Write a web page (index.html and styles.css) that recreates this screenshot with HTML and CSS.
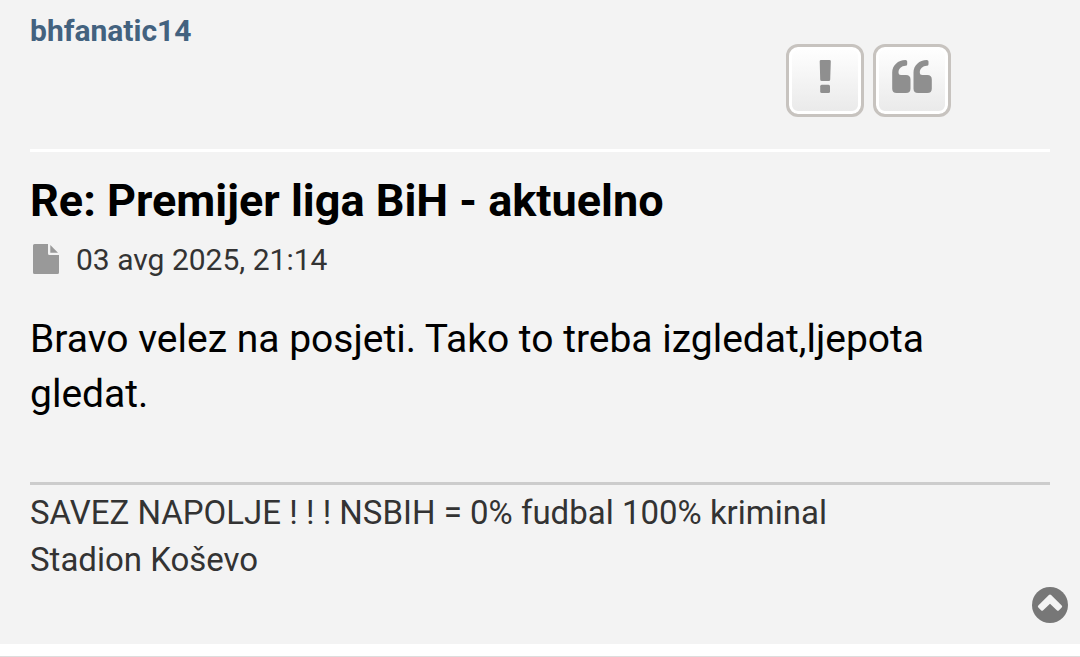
FILE: index.html
```
<!DOCTYPE html>
<html lang="bs">

<head>
    <meta charset="UTF-8">
    <meta name="viewport" content="width=device-width, initial-scale=1">
    <title>Premijer liga BiH - aktuelno</title>
    <link rel="stylesheet" href="styles.css">
</head>

<body>
    <div class="post">
        <div class="post-header">
            <a class="username" href="#">bhfanatic14</a>
            <div class="post-buttons">
                <a class="button" href="#" title="Prijavi">
                    <svg width="42" height="36" viewBox="0 0 42 36">
                        <path d="M17 1h8.500q1.300 0 1.300 1.300l-.6 18.200q0 1.500-1.500 1.500h-7q-1.500 0-1.500-1.500L15.700 2.300q0-1.300 1.300-1.300z" />
                        <rect x="16.200" y="25.700" width="9.800" height="8.300" rx="1.500" />
                    </svg>
                </a>
                <a class="button" href="#" title="Citiraj">
                    <svg width="42" height="36" viewBox="0 0 42 36">
                        <path id="quote" d="M1.200 13.500C1.200 6.500 7 1 14.500 1q1.700 0 1.700 1.500v2.800q0 1.500-1.700 1.500c-4 0-7 3-7 6.700q0 2.500 2.500 2.500h5q4.500 0 4.500 4.500v9q0 4.500-4.500 4.500H5.700q-4.500 0-4.500-4.500z" />
                        <use href="#quote" x="21.300" />
                    </svg>
                </a>
            </div>
        </div>

        <h3 class="title">Re: Premijer liga BiH - aktuelno</h3>
        <p class="author">
            <svg class="file-icon" width="26" height="31" viewBox="0 0 26 31">
                <path d="M1.500 0H15v9.500q0 1.500 1.500 1.500H26v17.500q0 1.500-1.500 1.500h-23Q0 30 0 28.500v-27Q0 0 1.500 0z" />
                <path d="M17.300 1 25 8.700h-7.700z" />
            </svg>
            03 avg 2025, 21:14
        </p>

        <div class="content">Bravo velez na posjeti. Tako to treba izgledat,ljepota gledat.</div>

        <div class="signature">
            SAVEZ NAPOLJE ! ! ! NSBIH = 0% fudbal 100% kriminal<br>
            Stadion Koševo
        </div>

        <a class="top" href="#" title="Vrh">
            <svg width="36" height="36" viewBox="0 0 36 36">
                <circle cx="18" cy="18" r="18" />
                <path class="arrow" d="M16.900 8q1.100-1 2.200 0l10.600 10.400q1 1.100 0 2.200l-2.700 2.700q-1.100 1-2.200 0L18 16.700l-6.800 6.600q-1.100 1-2.200 0l-2.700-2.700q-1-1.100 0-2.200z" />
            </svg>
        </a>
    </div>
    <div class="divider"></div>
</body>

</html>
```
FILE: styles.css
```
body {
    margin: 0;
    font-family: Roboto, sans-serif;
    background-color: #fff;
    color: #333;
    overflow: hidden;
}

a {
    text-decoration: none;
}

svg {
    display: block;
}

.post {
    position: relative;
    box-sizing: border-box;
    height: 644px;
    padding: 13px 30px 0;
    background-color: #f3f3f3;
}

.post-header {
    display: flex;
    justify-content: space-between;
    box-sizing: border-box;
    height: 139px;
    padding-right: 99px;
    border-bottom: 3px solid #fff;
}

.username {
    font-size: 30px;
    font-weight: 700;
    line-height: 36px;
    color: #43627f;
}

.post-buttons {
    display: flex;
    gap: 9px;
    padding-top: 31px;
}

.button {
    display: flex;
    justify-content: center;
    box-sizing: border-box;
    width: 78px;
    height: 73px;
    padding-top: 12px;
    border: 3px solid #c7c3bf;
    border-radius: 12px;
    background: linear-gradient(#fff, #e9e9e9);
    box-shadow: inset 0 0 0 3px #fff;
    fill: #8f8f8f;
}

.title {
    margin: 22px 0 0;
    font-size: 45px;
    font-weight: 700;
    line-height: 54px;
    color: #000;
}

.author {
    display: flex;
    gap: 17px;
    margin: 12px 0 32px;
    padding-left: 3px;
    font-size: 30px;
    line-height: 40px;
}

.file-icon {
    margin-top: 4px;
    fill: #999;
}

.content {
    height: 170px;
    font-size: 39px;
    line-height: 55px;
    color: #000;
}

.signature {
    padding-top: 4px;
    border-top: 3px solid #ccc;
    font-size: 33px;
    line-height: 47px;
}

.top {
    position: absolute;
    right: 12px;
    bottom: 21px;
    fill: #777;
}

.arrow {
    fill: #f3f3f3;
}

.divider {
    height: 12px;
    border-bottom: 1px solid #ddd;
}
```
